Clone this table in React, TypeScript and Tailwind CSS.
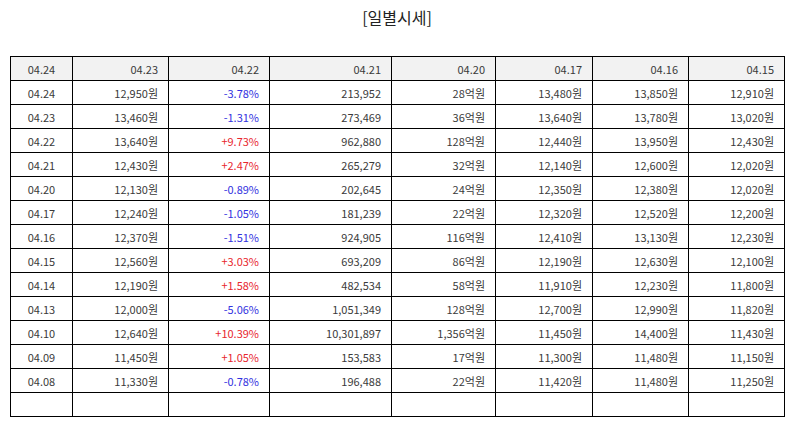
const header = ['04.24', '04.23', '04.22', '04.21', '04.20', '04.17', '04.16', '04.15'];

const rows: string[][] = [
  ['04.24', '12,950원', '-3.78%', '213,952', '28억원', '13,480원', '13,850원', '12,910원'],
  ['04.23', '13,460원', '-1.31%', '273,469', '36억원', '13,640원', '13,780원', '13,020원'],
  ['04.22', '13,640원', '+9.73%', '962,880', '128억원', '12,440원', '13,950원', '12,430원'],
  ['04.21', '12,430원', '+2.47%', '265,279', '32억원', '12,140원', '12,600원', '12,020원'],
  ['04.20', '12,130원', '-0.89%', '202,645', '24억원', '12,350원', '12,380원', '12,020원'],
  ['04.17', '12,240원', '-1.05%', '181,239', '22억원', '12,320원', '12,520원', '12,200원'],
  ['04.16', '12,370원', '-1.51%', '924,905', '116억원', '12,410원', '13,130원', '12,230원'],
  ['04.15', '12,560원', '+3.03%', '693,209', '86억원', '12,190원', '12,630원', '12,100원'],
  ['04.14', '12,190원', '+1.58%', '482,534', '58억원', '11,910원', '12,230원', '11,800원'],
  ['04.13', '12,000원', '-5.06%', '1,051,349', '128억원', '12,700원', '12,990원', '11,820원'],
  ['04.10', '12,640원', '+10.39%', '10,301,897', '1,356억원', '11,450원', '14,400원', '11,430원'],
  ['04.09', '11,450원', '+1.05%', '153,583', '17억원', '11,300원', '11,480원', '11,150원'],
  ['04.08', '11,330원', '-0.78%', '196,488', '22억원', '11,420원', '11,480원', '11,250원'],
];

const widths = ['w-[62px]', 'w-[96px]', 'w-[101px]', 'w-[122px]', 'w-[104px]', 'w-[97px]', 'w-[96px]', 'w-[96px]'];

function cellAlign(i: number) {
  return i === 0 ? 'text-center' : 'text-right pr-[10px]';
}

function changeColor(v: string) {
  return v.startsWith('+') ? 'text-[#e8262e]' : 'text-[#3232e0]';
}

export default function App() {
  return (
    <div className="w-[794px] h-[425px] bg-white font-['Noto_Sans_CJK_KR','Noto_Sans',sans-serif] text-[#3a3a3a]">
      <h2 className="pt-[6px] h-[56px] text-center text-[16px] leading-[22px] text-[#222]">[일별시세]</h2>
      <table className="ml-[10px] w-[775px] table-fixed border-separate border-spacing-0 border-l border-t border-black text-[11px] leading-[16px]">
        <colgroup>
          {widths.map((w, i) => (
            <col key={i} className={w} />
          ))}
        </colgroup>
        <thead>
          <tr className="bg-[#f2f2f2]">
            {header.map((h, i) => (
              <th key={i} className={`h-[24px] p-0 font-normal align-middle border-r border-b border-black ${cellAlign(i)}`}>
                {h}
              </th>
            ))}
          </tr>
        </thead>
        <tbody>
          {rows.map((r, ri) => (
            <tr key={ri}>
              {r.map((c, i) => (
                <td key={i} className={`h-[24px] p-0 align-middle border-r border-b border-black ${cellAlign(i)} ${i === 2 ? changeColor(c) : ''}`}>
                  {c}
                </td>
              ))}
            </tr>
          ))}
          <tr>
            {header.map((_, i) => (
              <td key={i} className="h-[24px] p-0 border-r border-b border-black"></td>
            ))}
          </tr>
        </tbody>
      </table>
    </div>
  );
}
